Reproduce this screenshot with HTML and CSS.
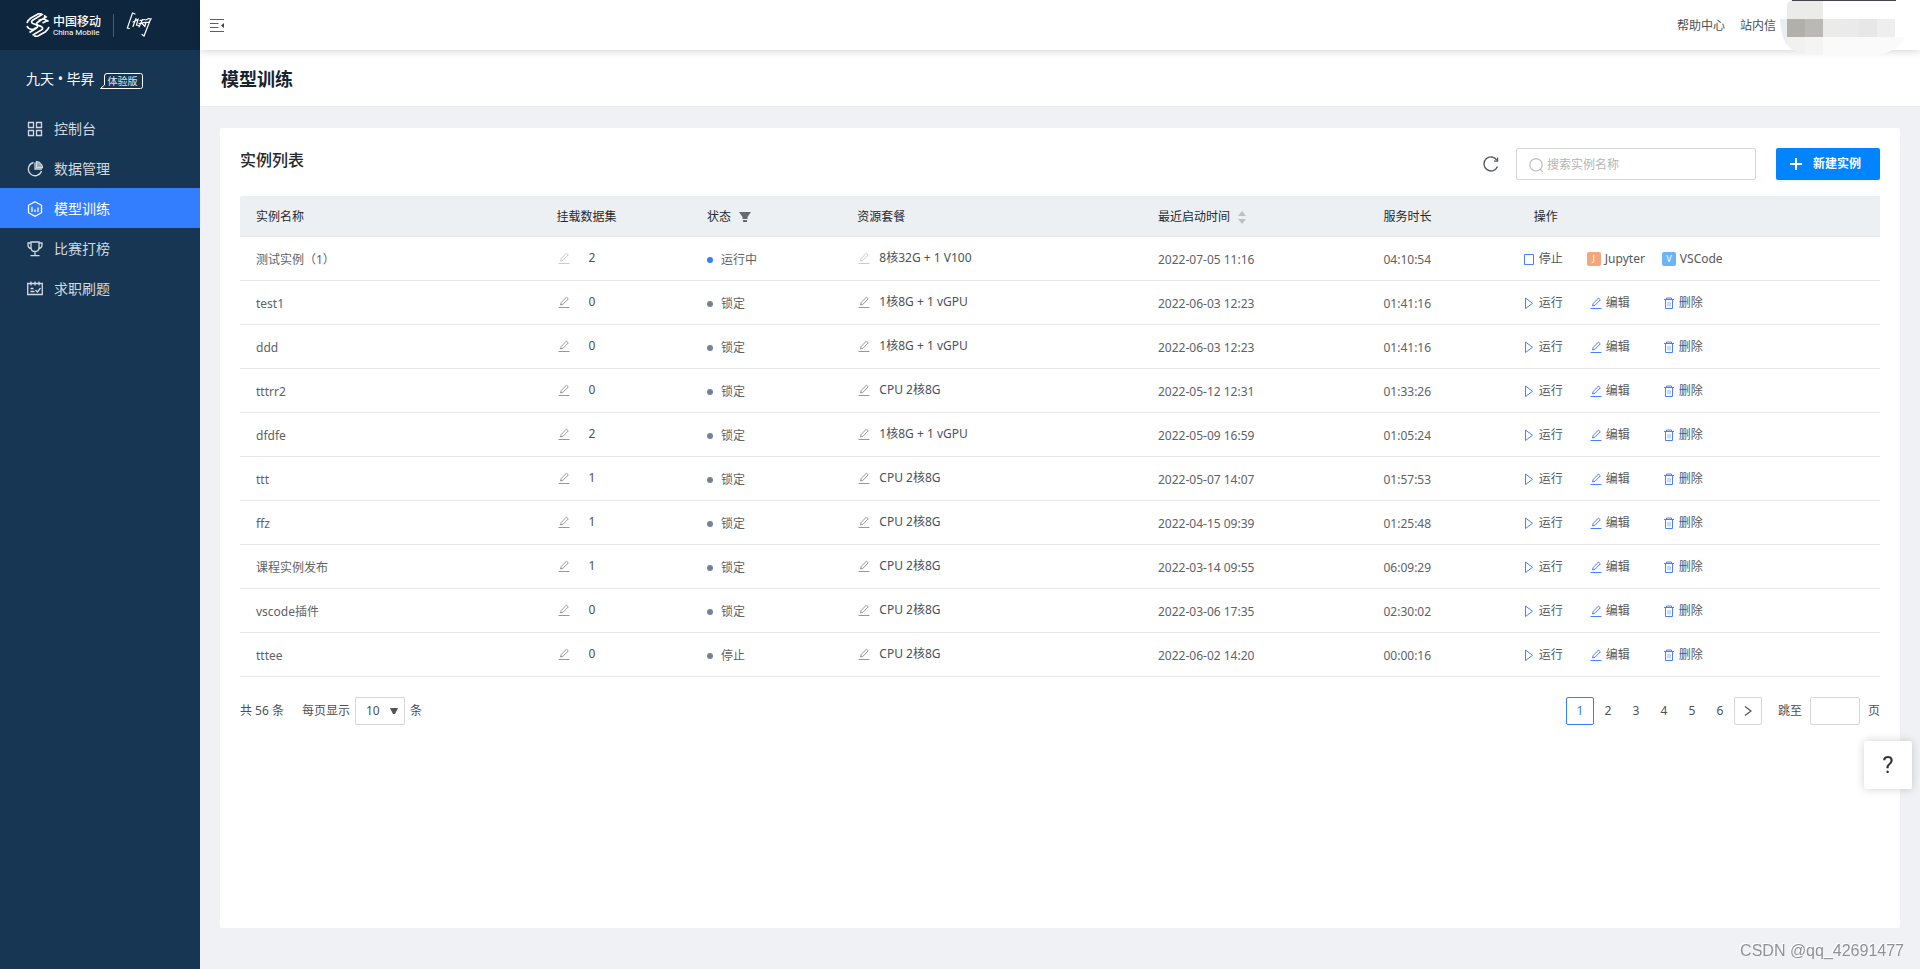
FILE: index.html
```html
<!DOCTYPE html>
<html lang="zh-CN">
<head>
<meta charset="utf-8">
<title>模型训练</title>
<link rel="stylesheet" href="styles.css">
</head>
<body>
<svg class="sprite" aria-hidden="true">
  <symbol id="pen" viewBox="0 0 12 12"><path d="M.5 11.500h11M2.500 9l.7-2.500 5.200-5.400 1.900 1.700-5.200 5.400z" fill="none" stroke="currentColor"/></symbol>
  <symbol id="play" viewBox="0 0 12 12"><path d="M2.500 1v10.500L9.500 6.300z" fill="none" stroke="currentColor"/></symbol>
  <symbol id="trash" viewBox="0 0 12 12"><path d="M1 2.500h10M3.500 2.500v-1.500h5v1.500M2.500 2.500v9h7v-9" fill="none" stroke="currentColor"/><path d="M5 5v4.500M7 5v4.500" fill="none" stroke="currentColor" stroke-opacity=".6"/></symbol>
  <symbol id="stop" viewBox="0 0 12 12"><path d="M1.500 1.500h9v10h-9z" fill="none" stroke="currentColor"/></symbol>
</svg>
<div class="app">
  <aside class="side">
    <div class="brand">
      <svg class="mark" viewBox="0 0 24 24" fill="none" stroke="#fff" stroke-width="1.700">
        <path d="M4 5.500l8-4.500q2-.8 4 .5l-9 5.500q-3 2 0 3.500l3 1.200q3 1.300.5 3.300l-7 4.500M1 10q1-3 4-5M1 13q1 3 5 3.500 2 0 4-2M18 2.500l2 1.500-8 5q-3 2 0 3.200l3 1.200q3 1.500.5 3.500l-9 5.300M20 18.500l-8 4.500q-2 .6-4-.3M12.500 7.500q4-2 6-1.200l4 2M23 14q-1 3-4 5M22.500 8.500q-1-1-3 0l-3 1.500"/>
      </svg>
      <div class="brand-name"><span class="brand-cn">中国移动</span><span class="brand-en">China Mobile</span></div>
      <span class="brand-line"></span>
      <svg class="sign" viewBox="0 0 26 26" fill="none" stroke="#fff" stroke-width="1.200" stroke-linecap="round">
        <path d="M9 2L6.500 1 1.300 16l2 .5M7 10l5-2.500-1.500 5.500 2 .5M10 6.500L7 14.500M14 8.500l4.500-1M13 11.500l6-1.200M16.500 7.500L13 15M16 11.500l3 3M19.500 8l2-.8M22 6.500l3 .5-2.500 3.500M20.500 10.500l3-.5-5.500 14-2-1.500M20 10l-1 4"/>
      </svg>
    </div>
    <div class="product"><span>九天 • 毕昇</span>
      <span class="trial"><svg viewBox="0 0 43 17" fill="none" stroke="#fff"><path d="M.5 15.500L4.500 12V3q0-2.500 2.500-2.500h33.500q2 0 2 2v11q0 2-2 2z"/></svg><span>体验版</span></span>
    </div>
    <nav class="menu">
      <a href="#"><svg viewBox="0 0 16 16"><path d="M1.500 1.500h5v5h-5zM9.500 1.500h5v5h-5zM1.500 9.500h5v5h-5zM9.500 9.500h5v5h-5z"/></svg>控制台</a>
      <a href="#"><svg viewBox="0 0 16 16"><path d="M6.500 1.500a6.700 6.700 0 1 0 8 8.500"/><path d="M9.500.7v6h6a6.500 6.500 0 0 0-6-6z" fill="currentColor" fill-opacity=".7"/><path d="M8 1.500V8h7"/></svg>数据管理</a>
      <a href="#" class="active"><svg viewBox="0 0 16 16"><path d="M8 .7l6.500 3.600v7.400L8 15.300l-6.500-3.600V4.300zM5 6v5M8 8.500V11M11 6.500V11"/></svg>模型训练</a>
      <a href="#"><svg viewBox="0 0 16 16"><path d="M4 1h8v5.500q0 4-4 4t-4-4zM4 2H1v2q0 3 3 3.500M12 2h3v2q0 3-3 3.500M8 10.500v4M3.500 14.700h9"/></svg>比赛打榜</a>
      <a href="#"><svg viewBox="0 0 16 16"><path d="M.7 2.500h14.600v11H.7zM4 .5v4M8 .5v4M12 .5v4M3.500 7.500h3M3.500 10.500h4M8.500 9l2 2 3-4"/></svg>求职刷题</a>
    </nav>
  </aside>
  <div class="body">
    <header class="top">
      <button class="fold" aria-label="收起菜单"><svg viewBox="0 0 14 14"><path d="M0 1.500h14M0 5.500h8.500M0 9.500h8.500M0 13.500h14" stroke="#5a5f66" fill="none"/><path d="M14 5v5l-3-2.500z" fill="#444"/></svg></button>
      <div class="top-links"><a href="#">帮助中心</a><a href="#">站内信</a></div>
      <svg class="user" viewBox="0 0 130 56">
        <path d="M7 4q3-4 6-4h23v19H7z" fill="#ebebe9"/><path d="M12 0h104v1H12z" fill="#45424a"/>
        <path d="M0 19h7v26Q0 34 0 19z" fill="#eaedf1"/>
        <path d="M7 19h18v18H7z" fill="#b1b0aa"/><path d="M25 19h18v18H25z" fill="#bab9b5"/>
        <path d="M43 19h18v18H43z" fill="#ebebea"/><path d="M61 19h18v18H61z" fill="#eaeaea"/><path d="M79 19h18v18H79z" fill="#e7e7e7"/><path d="M97 19h18v18H97z" fill="#eee"/>
        <path d="M36 1h7v18h-7z" fill="#ebebe9"/>
        <path d="M7 37h18v17Q13 52 7 45z" fill="#f1f1f1"/><path d="M25 37h18v18l-18-1z" fill="#f4f4f4"/>
        <path d="M43 37h82q-5 11-23 18H43z" fill="#fafafa"/>
      </svg>
    </header>
    <div class="title"><h1>模型训练</h1></div>
    <main class="card">
      <div class="bar">
        <h2>实例列表</h2>
        <button class="refresh" aria-label="刷新"><svg viewBox="0 0 16 16" fill="none" stroke="#555b63" stroke-width="1.400"><path d="M14.500 10.500A7 7 0 1 1 14 4.300"/><path d="M11 5.200h3.600V1.500" stroke-width="1.200"/></svg></button>
        <label class="search"><svg viewBox="0 0 14 14" fill="none" stroke="#bbb" stroke-width="1.200"><circle cx="7" cy="6.800" r="6.200"/><path d="M11 11l2.700 2.700"/></svg><input type="text" placeholder="搜索实例名称" aria-label="搜索实例名称"></label>
        <button class="create"><svg viewBox="0 0 12 12"><path d="M6 0v12M0 6h12" stroke="#fff" stroke-width="2"/></svg>新建实例</button>
      </div>
      <table>
        <colgroup><col class="c-name"><col class="c-data"><col class="c-state"><col class="c-name"><col class="c-time"><col class="c-dur"><col></colgroup>
        <thead><tr><th>实例名称</th><th>挂载数据集</th>
          <th><span class="h">状态<svg class="funnel" viewBox="0 0 12 10"><path d="M0 0h12L8.500 5h-5zM3.500 5h5v2h-5zM4 8h4v2H4z" fill="#666b72"/></svg></span></th>
          <th>资源套餐</th>
          <th><span class="h">最近启动时间<svg class="sort" viewBox="0 0 8 13"><path d="M4 0l4 5H0zM4 13l4-5H0z" fill="#bfbfbf"/></svg></span></th>
          <th>服务时长</th><th>操作</th></tr></thead>
        <tbody>
          <tr><td>测试实例（1）</td><td class="ed off"><span><svg><use href="#pen"/></svg>2</span></td><td class="st run"><span>运行中</span></td><td class="pk off"><span><svg><use href="#pen"/></svg>8核32G + 1 V100</span></td><td>2022-07-05 11:16</td><td>04:10:54</td><td class="ops live"><div><a href="#"><svg><use href="#stop"/></svg>停止</a><a href="#"><i class="j">J</i>Jupyter</a><a href="#"><i class="v">V</i>VSCode</a></div></td></tr>
          <tr><td>test1</td><td class="ed"><span><svg><use href="#pen"/></svg>0</span></td><td class="st"><span>锁定</span></td><td class="pk"><span><svg><use href="#pen"/></svg>1核8G + 1 vGPU</span></td><td>2022-06-03 12:23</td><td>01:41:16</td><td class="ops"><div><a href="#"><svg><use href="#play"/></svg>运行</a><a href="#"><svg><use href="#pen"/></svg>编辑</a><a href="#"><svg><use href="#trash"/></svg>删除</a></div></td></tr>
          <tr><td>ddd</td><td class="ed"><span><svg><use href="#pen"/></svg>0</span></td><td class="st"><span>锁定</span></td><td class="pk"><span><svg><use href="#pen"/></svg>1核8G + 1 vGPU</span></td><td>2022-06-03 12:23</td><td>01:41:16</td><td class="ops"><div><a href="#"><svg><use href="#play"/></svg>运行</a><a href="#"><svg><use href="#pen"/></svg>编辑</a><a href="#"><svg><use href="#trash"/></svg>删除</a></div></td></tr>
          <tr><td>tttrr2</td><td class="ed"><span><svg><use href="#pen"/></svg>0</span></td><td class="st"><span>锁定</span></td><td class="pk"><span><svg><use href="#pen"/></svg>CPU 2核8G</span></td><td>2022-05-12 12:31</td><td>01:33:26</td><td class="ops"><div><a href="#"><svg><use href="#play"/></svg>运行</a><a href="#"><svg><use href="#pen"/></svg>编辑</a><a href="#"><svg><use href="#trash"/></svg>删除</a></div></td></tr>
          <tr><td>dfdfe</td><td class="ed"><span><svg><use href="#pen"/></svg>2</span></td><td class="st"><span>锁定</span></td><td class="pk"><span><svg><use href="#pen"/></svg>1核8G + 1 vGPU</span></td><td>2022-05-09 16:59</td><td>01:05:24</td><td class="ops"><div><a href="#"><svg><use href="#play"/></svg>运行</a><a href="#"><svg><use href="#pen"/></svg>编辑</a><a href="#"><svg><use href="#trash"/></svg>删除</a></div></td></tr>
          <tr><td>ttt</td><td class="ed"><span><svg><use href="#pen"/></svg>1</span></td><td class="st"><span>锁定</span></td><td class="pk"><span><svg><use href="#pen"/></svg>CPU 2核8G</span></td><td>2022-05-07 14:07</td><td>01:57:53</td><td class="ops"><div><a href="#"><svg><use href="#play"/></svg>运行</a><a href="#"><svg><use href="#pen"/></svg>编辑</a><a href="#"><svg><use href="#trash"/></svg>删除</a></div></td></tr>
          <tr><td>ffz</td><td class="ed"><span><svg><use href="#pen"/></svg>1</span></td><td class="st"><span>锁定</span></td><td class="pk"><span><svg><use href="#pen"/></svg>CPU 2核8G</span></td><td>2022-04-15 09:39</td><td>01:25:48</td><td class="ops"><div><a href="#"><svg><use href="#play"/></svg>运行</a><a href="#"><svg><use href="#pen"/></svg>编辑</a><a href="#"><svg><use href="#trash"/></svg>删除</a></div></td></tr>
          <tr><td>课程实例发布</td><td class="ed"><span><svg><use href="#pen"/></svg>1</span></td><td class="st"><span>锁定</span></td><td class="pk"><span><svg><use href="#pen"/></svg>CPU 2核8G</span></td><td>2022-03-14 09:55</td><td>06:09:29</td><td class="ops"><div><a href="#"><svg><use href="#play"/></svg>运行</a><a href="#"><svg><use href="#pen"/></svg>编辑</a><a href="#"><svg><use href="#trash"/></svg>删除</a></div></td></tr>
          <tr><td>vscode插件</td><td class="ed"><span><svg><use href="#pen"/></svg>0</span></td><td class="st"><span>锁定</span></td><td class="pk"><span><svg><use href="#pen"/></svg>CPU 2核8G</span></td><td>2022-03-06 17:35</td><td>02:30:02</td><td class="ops"><div><a href="#"><svg><use href="#play"/></svg>运行</a><a href="#"><svg><use href="#pen"/></svg>编辑</a><a href="#"><svg><use href="#trash"/></svg>删除</a></div></td></tr>
          <tr><td>tttee</td><td class="ed"><span><svg><use href="#pen"/></svg>0</span></td><td class="st"><span>停止</span></td><td class="pk"><span><svg><use href="#pen"/></svg>CPU 2核8G</span></td><td>2022-06-02 14:20</td><td>00:00:16</td><td class="ops"><div><a href="#"><svg><use href="#play"/></svg>运行</a><a href="#"><svg><use href="#pen"/></svg>编辑</a><a href="#"><svg><use href="#trash"/></svg>删除</a></div></td></tr>
        </tbody>
      </table>
      <footer class="pager">
        <span class="total">共 56 条</span>
        <label class="size">每页显示<span class="pick"><select><option>10</option></select><svg viewBox="0 0 8 6"><path d="M0 0h8L5 6H3z" fill="#555"/></svg></span>条</label>
        <div class="pages">
          <button class="on">1</button><button>2</button><button>3</button><button>4</button><button>5</button><button>6</button>
          <button class="next" aria-label="下一页"><svg viewBox="0 0 8 10"><path d="M1 .5L7 5 1 9.500" fill="none" stroke="#555" stroke-width="1.200"/></svg></button>
        </div>
        <label class="jump">跳至<input type="text">页</label>
      </footer>
    </main>
  </div>
</div>
<button class="help">?</button>
<div class="mark-text">CSDN @qq_42691477</div>
</body>
</html>
```

FILE: styles.css
```css
* { box-sizing: border-box; }
body, h1, h2 { margin: 0; }
body { font: 12px/18px "Noto Sans", "Noto Sans CJK SC", sans-serif; color: #4c5157; background: #eff1f5; }
button, input, select { font: inherit; color: inherit; background: none; border: 0; padding: 0; margin: 0; }
button { cursor: pointer; }
a { color: inherit; text-decoration: none; }
svg { display: block; flex: none; }
.sprite { display: none; }
.app { display: flex; min-height: 100vh; }

.side { width: 200px; flex: none; background: #173654; color: #fff; }
.brand { display: flex; align-items: center; height: 50px; padding-left: 26px; background: #0f273e; }
.mark { width: 24px; height: 24px; }
.brand-name { display: flex; flex-direction: column; gap: 1px; width: 48px; margin-left: 3px; white-space: nowrap; }
.brand-cn { font: 500 12px/13px "Noto Sans CJK SC", sans-serif; }
.brand-en { font: 8px/9px Roboto, sans-serif; }
.brand-line { width: 1px; height: 23px; margin-left: 12px; background: #4a5c6e; }
.sign { width: 26px; height: 26px; margin-left: 12px; }
.product { display: flex; align-items: center; height: 58px; padding-left: 26px; font-size: 14px; gap: 5px; }
.trial { position: relative; width: 43px; height: 17px; margin-top: 4px; }
.trial svg { position: absolute; inset: 0; }
.trial span { display: block; padding-left: 8px; font-size: 10px; line-height: 16px; color: #dfe5ea; position: relative; }
.menu a { display: flex; align-items: center; height: 40px; padding: 1px 0 0 27px; gap: 11px; font-size: 14px; color: #d3d9de; }
.menu svg { width: 16px; height: 16px; fill: none; stroke: currentColor; stroke-width: 1.3; }
.menu .active { background: #337dff; color: #fff; }

.body { flex: 1; min-width: 0; display: flex; flex-direction: column; }
.top { position: relative; display: flex; align-items: center; height: 50px; padding: 0 10px; background: #fff; box-shadow: 0 1px 8px rgba(0, 0, 0, .18); }
.fold svg { width: 14px; height: 14px; }
.top-links { display: flex; gap: 15px; margin-left: auto; padding-top: 2px; }
.user { width: 130px; height: 56px; margin-left: 4px; align-self: flex-start; }
.title { height: 57px; padding: 0 21px; background: #fff; border-bottom: 1px solid #e9ebee; }
.title h1 { font-size: 18px; line-height: 58px; font-weight: 700; color: #17232e; }
.card { flex: 1; margin: 21px 20px 41px; padding: 20px; background: #fff; border-radius: 2px; }

.bar { display: flex; align-items: center; height: 32px; margin-bottom: 16px; }
.bar h2 { font-size: 16px; line-height: 24px; font-weight: 500; color: #25292e; margin-right: auto; padding-bottom: 8px; }
.refresh svg { width: 16px; height: 16px; }
.search { display: flex; align-items: center; gap: 4px; width: 240px; height: 32px; margin: 0 20px 0 17px; padding: 1px 12px 0; border: 1px solid #d5d6d8; border-radius: 2px; }
.search svg { width: 14px; height: 14px; }
.search input { flex: 1; min-width: 0; outline: 0; }
.search input::placeholder { color: #b5b5b5; opacity: 1; }
.create { display: flex; align-items: center; gap: 11px; width: 104px; height: 32px; padding: 0 14px; border-radius: 2px; background: #0084ff; color: #fff; font-weight: 700; white-space: nowrap; box-shadow: 0 2px 0 rgba(0, 0, 0, .04); }
.create svg { width: 12px; height: 12px; }

table { width: 100%; table-layout: fixed; border-collapse: separate; border-spacing: 0; }
.c-name { width: 18.33%; }
.c-data, .c-state, .c-dur { width: 9.17%; }
.c-time { width: 13.75%; }
th, td { padding: 0 16px; text-align: left; border-bottom: 1px solid #e6e8ea; white-space: nowrap; }
th { height: 41px; padding-top: 2px; font-weight: 400; color: #25292e; background: #ecf0f3; }
th:first-child { border-radius: 2px 0 0; }
td { height: 44px; padding-top: 2px; color: #606266; }
td span { display: flex; align-items: center; }
.h { display: inline-flex; align-items: center; gap: 8px; }
.funnel { width: 12px; height: 10px; }
.sort { width: 8px; height: 13px; }
.ed, .pk { padding-top: 0; padding-bottom: 2px; color: #4c5157; }
.ed svg, .pk svg { width: 12px; height: 12px; margin-left: 1px; color: #95989c; }
.ed span { gap: 19px; }
.pk span { gap: 9px; }
.off svg { color: #ccc; }
.st span { gap: 8px; }
.st span::before { content: ""; width: 6px; height: 6px; border-radius: 50%; background: #74829b; }
.run span::before { background: #337dff; }
.ops { padding: 0 5px; }
.ops div { display: grid; grid-template-columns: 67px 73px 1fr; align-items: center; }
.ops a { display: flex; align-items: center; gap: 4px; color: #54585e; }
.ops svg { width: 12px; height: 12px; color: #4a80ff; }
.live div { grid-template-columns: 64px 75px 1fr; }
.ops i { width: 14px; height: 14px; border-radius: 2px; font-style: normal; font-size: 9px; line-height: 14px; text-align: center; color: #fff; background: #f4a77a; }
.ops .v { background: #6bb4f8; }

.pager { display: flex; align-items: center; margin-top: 20px; color: #4c5157; }
.total { margin-right: 18px; }
.size { display: flex; align-items: center; gap: 5px; }
.pick { position: relative; display: block; }
.pick select { appearance: none; width: 50px; height: 28px; padding: 0 10px; border: 1px solid #d5d6d8; border-radius: 2px; display: block; }
.pick svg { position: absolute; right: 7px; top: 11px; width: 8px; height: 6px; pointer-events: none; }
.pages { display: flex; margin-left: auto; }
.pages button { width: 28px; height: 28px; display: grid; place-items: center; border-radius: 2px; }
.pages .on { border: 1px solid #337dff; color: #337dff; }
.pages .next { border: 1px solid #d5d6d8; }
.pages svg { width: 8px; height: 10px; }
.jump { display: flex; align-items: center; gap: 8px; margin-left: 16px; }
.jump input { width: 50px; height: 28px; border: 1px solid #d5d6d8; border-radius: 2px; }

.help { position: fixed; right: 8px; bottom: 180px; width: 48px; height: 48px; background: #fff; border-radius: 2px; font: 24px/48px Roboto, sans-serif; color: #333; box-shadow: 0 0 10px rgba(0, 0, 0, .18); }
.mark-text { position: fixed; right: 16px; bottom: 8px; font: 16px/20px "Liberation Sans", sans-serif; color: #8f9194; text-shadow: -1px -1px 0 #fff; }
```
